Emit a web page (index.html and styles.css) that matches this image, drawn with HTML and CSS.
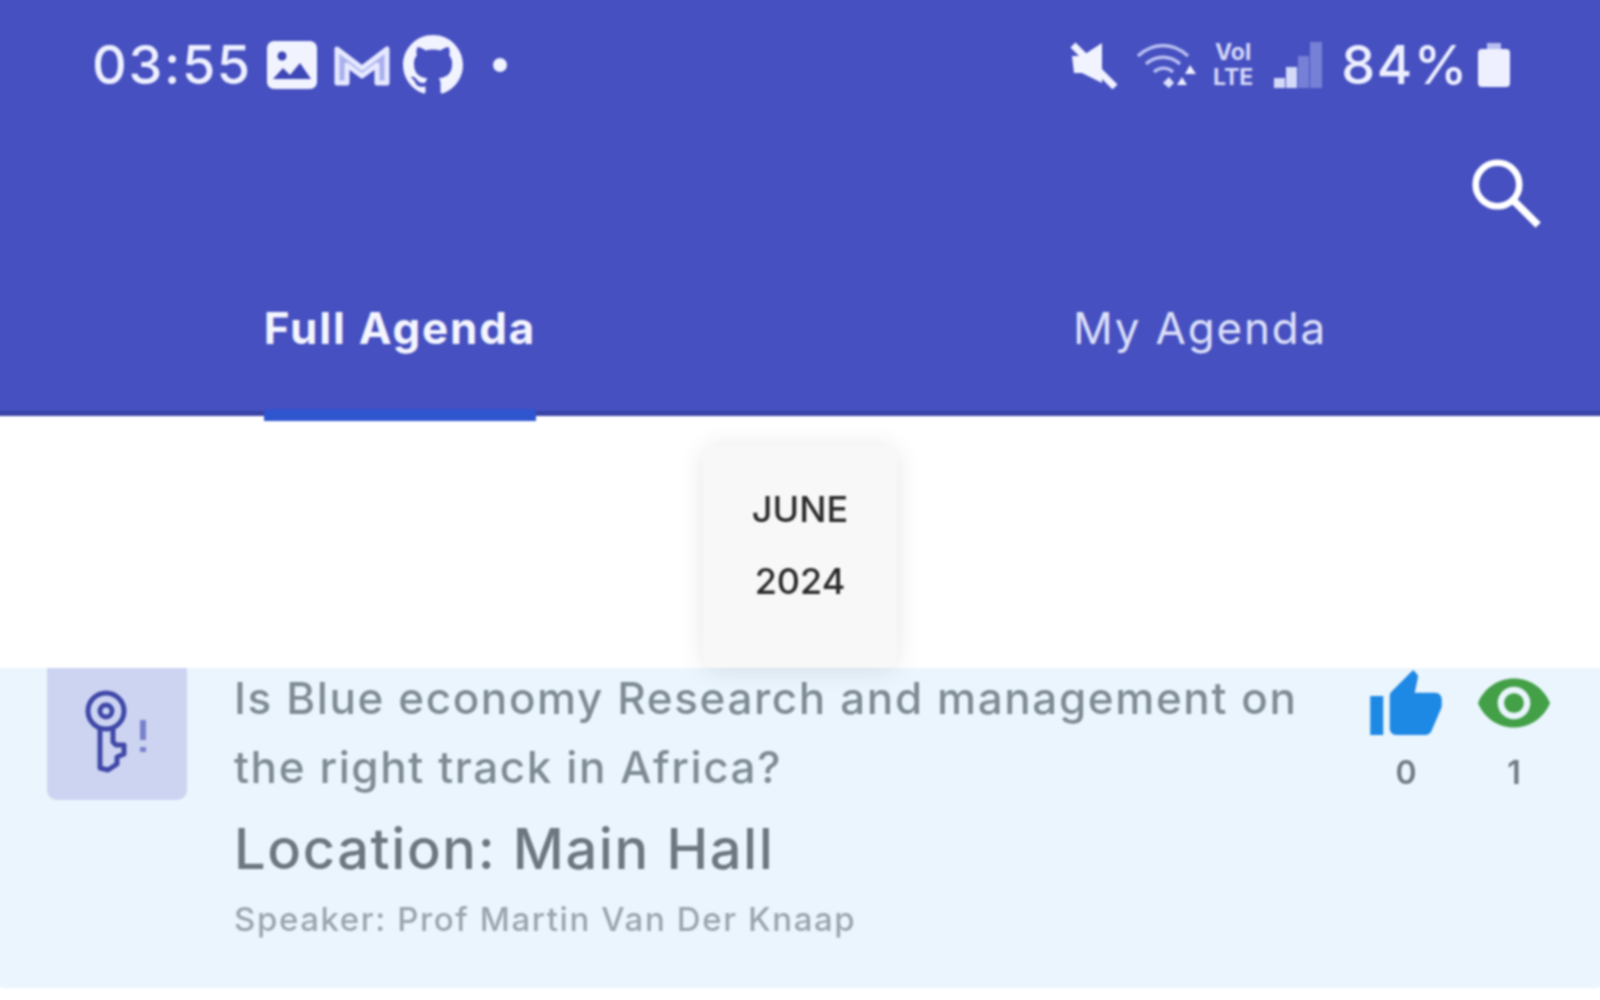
FILE: index.html
```html
<!DOCTYPE html>
<html lang="en">
<head>
  <meta charset="UTF-8">
  <title>Agenda</title>
  <link rel="stylesheet" href="styles.css">
</head>
<body>
  <div class="screen">
    <header class="header">
      <div class="status-bar">
        <div class="status-left">
          <span class="clock">03:55</span>
          <svg class="ic-image" viewBox="0 0 50 48"><rect width="50" height="48" rx="7" fill="#f1f3ff"/><circle cx="15" cy="15" r="4.5" fill="#3d47b5"/><path d="M6 38l10-11 7 7 10-12 11 16z" fill="#3d47b5"/></svg>
          <svg class="ic-gmail" viewBox="0 0 58 44"><path d="M4 6l25 19L54 6v34H44V22L29 33 14 22v18H4z" fill="#a9b0ec" stroke="#e6e9ff" stroke-width="5" stroke-linejoin="round"/></svg>
          <svg class="ic-github" viewBox="0 0 16 16"><path fill="#f1f3ff" d="M8 0C3.58 0 0 3.58 0 8c0 3.54 2.29 6.53 5.47 7.59.4.07.55-.17.55-.38 0-.19-.01-.82-.01-1.49-2.01.37-2.53-.49-2.69-.94-.09-.23-.48-.94-.82-1.13-.28-.15-.68-.52-.01-.53.63-.01 1.08.58 1.23.82.72 1.21 1.87.87 2.33.66.07-.52.28-.87.51-1.07-1.78-.2-3.64-.89-3.64-3.95 0-.87.31-1.59.82-2.15-.08-.2-.36-1.02.08-2.12 0 0 .67-.21 2.2.82.64-.18 1.32-.27 2-.27.68 0 1.36.09 2 .27 1.53-1.04 2.2-.82 2.2-.82.44 1.1.16 1.92.08 2.12.51.56.82 1.27.82 2.15 0 3.07-1.87 3.75-3.65 3.95.29.25.54.73.54 1.48 0 1.07-.01 1.93-.01 2.2 0 .21.15.46.55.38A8.013 8.013 0 0016 8c0-4.42-3.58-8-8-8z"/></svg>
          <span class="dot"></span>
        </div>
        <div class="status-right">
          <svg class="ic-mute" viewBox="0 0 48 48"><path d="M2 15h10L32 2v40L12 32H4z" fill="#f1f3ff"/><path d="M3 4l42 42" stroke="#f1f3ff" stroke-width="7"/></svg>
          <svg class="ic-wifi" viewBox="0 0 62 48"><g fill="none" stroke="#b9bff2" stroke-width="3.5"><path d="M2 15c15-14 35-14 50 0"/><path d="M10 23c10-9 24-9 34 0"/><path d="M18 31c6-5 13-5 19 0"/></g><path d="M27 42l6-6 5 6-5 5z" fill="#dfe3fb"/><path d="M46 36l-5 8h10zM54 24l-5 9h11z" fill="#eef0ff"/></svg>
          <span class="volte"><span>Vol</span><span>LTE</span></span>
          <svg class="ic-signal" viewBox="0 0 48 46"><path d="M0 46V36h11v10zM12 46V25h11v21z" fill="#d5d9f8"/><path d="M24 46V14h11v32zM36 46V0h12v46z" fill="#7680d6"/></svg>
          <span class="battery-text">84%</span>
          <span class="battery"></span>
        </div>
      </div>
      <div class="toolbar">
        <svg class="ic-search" viewBox="0 0 74 74"><circle cx="28" cy="28" r="23" fill="none" stroke="#fff" stroke-width="7"/><path d="M45 45l26 26" stroke="#fff" stroke-width="8"/></svg>
      </div>
      <nav class="tabs">
        <div class="tab tab-active"><span class="tab-label">Full Agenda<i class="tab-line"></i></span></div>
        <div class="tab"><span class="tab-label">My Agenda</span></div>
      </nav>
    </header>

    <div class="date-row">
      <div class="date-chip">
        <span>JUNE</span>
        <span>2024</span>
      </div>
    </div>

    <article class="session">
      <div class="session-type">
        <svg viewBox="0 0 70 90"><g fill="none" stroke="#4048a8" stroke-width="5" stroke-linejoin="round"><circle cx="23" cy="21" r="18"/><circle cx="23" cy="21" r="6"/><path d="M17 38v40l8 2 9-6v-7l7-3v-9h-8l-3-3V38"/></g><path d="M60 30v20M60 57v5" stroke="#7a82cc" stroke-width="6"/></svg>
      </div>
      <div class="session-body">
        <h3 class="session-title">Is Blue economy Research and management on the right track in Africa?</h3>
        <p class="session-location">Location: Main Hall</p>
        <p class="session-speaker">Speaker: Prof Martin Van Der Knaap</p>
      </div>
      <div class="session-stats">
        <div class="stat">
          <svg class="ic-thumb" viewBox="1 1 22 20"><path fill="#1e88e5" d="M1 21h4V9H1v12zm22-11c0-1.1-.9-2-2-2h-6.31l.95-4.57.03-.32c0-.41-.17-.79-.44-1.06L14.17 1 7.59 7.59C7.22 7.95 7 8.45 7 9v10c0 1.1.9 2 2 2h9c.83 0 1.54-.5 1.84-1.22l3.02-7.05c.09-.23.14-.47.14-.73v-2z"/></svg>
          <span>0</span>
        </div>
        <div class="stat">
          <svg class="ic-eye" viewBox="1 4.5 22 15"><path fill="#43a047" fill-rule="evenodd" d="M12 4.5C7 4.5 2.73 7.61 1 12c1.73 4.39 6 7.5 11 7.5s9.27-3.11 11-7.5c-1.73-4.39-6-7.5-11-7.5zM12 17c-2.76 0-5-2.24-5-5s2.24-5 5-5 5 2.24 5 5-2.24 5-5 5zm0-8c-1.66 0-3 1.34-3 3s1.34 3 3 3 3-1.34 3-3-1.34-3-3-3z"/></svg>
          <span>1</span>
        </div>
      </div>
    </article>
  </div>
</body>
</html>
```

FILE: styles.css
```css
html, body {
  margin: 0;
  height: 100%;
  background: #fff;
  overflow: hidden;
}
/* 10px bleed on top and sides so the blur doesn't fade at the window edge */
.screen {
  display: flex;
  flex-direction: column;
  width: 1620px;
  height: 1010px;
  margin: -10px 0 0 -10px;
  font-family: Inter, "Noto Sans", sans-serif;
  filter: blur(1.2px);
}
.header {
  background: #4650c0;
  height: 421px;
  border-bottom: 5px solid #3a43a6;
  color: #eef0ff;
  flex: none;
}
.status-bar {
  display: flex;
  justify-content: space-between;
  align-items: center;
  height: 130px;
  padding: 10px 100px 0 102px;
}
.status-left, .status-right {
  display: flex;
  align-items: center;
}
.clock, .battery-text {
  font-size: 54px;
  line-height: 1;
  font-weight: 500;
  letter-spacing: 1.6px;
}
.clock {
  margin-right: 15px;
}
.ic-image { width: 50px; height: 48px; margin-right: 16px; }
.ic-gmail { width: 58px; height: 44px; margin-right: 12px; }
.ic-github { width: 60px; height: 60px; }
.dot {
  width: 14px;
  height: 14px;
  border-radius: 50%;
  background: #f1f3ff;
  margin-left: 30px;
}
.ic-mute { width: 48px; height: 48px; margin-right: 18px; }
.ic-wifi { width: 62px; height: 48px; margin-right: 11px; }
.volte {
  display: flex;
  flex-direction: column;
  font-size: 23px;
  line-height: 25px;
  font-weight: 700;
  color: #d5d9f8;
  width: 48px;
  margin-right: 17px;
  text-align: center;
}
.ic-signal { width: 48px; height: 46px; margin-right: 19px; }
.battery-text {
  margin-right: 9px;
}
.battery {
  position: relative;
  width: 32px;
  height: 38px;
  margin-top: 6px;
  border-radius: 4px;
  background: #eef0ff;
}
.battery::before {
  content: "";
  position: absolute;
  top: -6px;
  left: 9px;
  width: 14px;
  height: 6px;
  background: #b8bef0;
}
.toolbar {
  display: flex;
  justify-content: flex-end;
  align-items: center;
  height: 120px;
  padding: 6px 69px 0 0;
  box-sizing: border-box;
}
.ic-search { width: 70px; height: 70px; }
.tabs {
  display: flex;
  height: 161px;
  padding: 0 10px;
}
.tab {
  flex: 1;
  display: flex;
  justify-content: center;
  padding-top: 50px;
  font-size: 44px;
  line-height: 56px;
  letter-spacing: 1.8px;
  color: #dde0fa;
}
.tab-label {
  position: relative;
  height: 111px;
}
.tab-active {
  font-weight: 700;
  color: #f4f5ff;
}
.tab-line {
  position: absolute;
  left: 0;
  right: 0;
  bottom: -10px;
  height: 12px;
  border-radius: 3px 3px 0 0;
  background: #2f55cf;
}
.date-row {
  display: flex;
  justify-content: center;
  height: 252px;
  flex: none;
  position: relative;
  z-index: 1;
}
.date-chip {
  display: flex;
  flex-direction: column;
  align-items: center;
  gap: 36px;
  width: 194px;
  height: 177px;
  padding-top: 46px;
  margin-top: 29px;
  border-radius: 14px;
  background: #f8f8f8;
  box-shadow: 0 2px 26px rgba(0,0,0,0.1);
  font-size: 36px;
  line-height: 36px;
  font-weight: 500;
  color: #2b2b2b;
}
.session {
  display: flex;
  align-items: flex-start;
  height: 320px;
  flex: none;
  background: #eaf5fd;
  border-radius: 0 0 16px 16px;
}
.session-type {
  display: flex;
  justify-content: center;
  align-items: center;
  width: 140px;
  height: 132px;
  margin-left: 57px;
  background: #ccd4f1;
  border-radius: 0 0 10px 10px;
  flex: none;
}
.session-type svg { width: 70px; height: 90px; margin-left: 2px; margin-top: 2px; }
.session-body {
  flex: 1;
  padding-left: 47px;
}
.session-title {
  margin: -4px 0 0;
  max-width: 1100px;
  font-size: 44px;
  line-height: 69px;
  font-weight: 500;
  letter-spacing: 1.6px;
  color: #7f8b93;
}
.session-location {
  margin: 12px 0 0;
  font-size: 56px;
  line-height: 70px;
  font-weight: 500;
  letter-spacing: 1.6px;
  color: #6c7780;
}
.session-speaker {
  margin: 14px 0 0;
  font-size: 33px;
  line-height: 42px;
  font-weight: 500;
  letter-spacing: 1.6px;
  color: #9aa5ad;
}
.session-stats {
  display: flex;
  gap: 36px;
  padding: 2px 60px 0 0;
}
.stat {
  display: flex;
  flex-direction: column;
  align-items: center;
  gap: 18px;
  width: 72px;
  font-size: 32px;
  line-height: 40px;
  font-weight: 600;
  color: #6f7a82;
}
.ic-thumb { width: 72px; height: 65px; }
.ic-eye { width: 72px; height: 50px; margin: 8px 0 7px; }
```
